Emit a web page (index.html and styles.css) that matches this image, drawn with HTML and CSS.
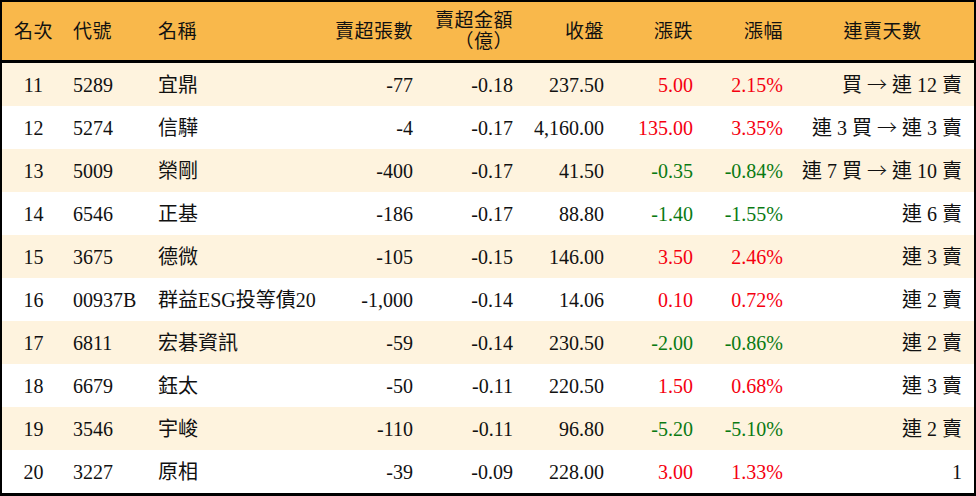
FILE: index.html
```html
<!DOCTYPE html>
<html lang="zh-Hant">
<head>
<meta charset="utf-8">
<title>賣超排行</title>
<link rel="stylesheet" href="styles.css">
</head>
<body>
<table class="rank">
  <colgroup>
    <col class="c-rank"><col class="c-code"><col class="c-name"><col class="c-vol"><col class="c-amt"><col class="c-close"><col class="c-chg"><col class="c-pct"><col class="c-days">
  </colgroup>
  <thead>
    <tr>
      <th class="center">名次</th>
      <th class="left">代號</th>
      <th class="left">名稱</th>
      <th class="right">賣超張數</th>
      <th class="right">賣超金額<br>（億）</th>
      <th class="right">收盤</th>
      <th class="right">漲跌</th>
      <th class="right">漲幅</th>
      <th class="center">連賣天數</th>
    </tr>
  </thead>
  <tbody>
    <tr><td class="center">11</td><td>5289</td><td>宜鼎</td><td class="right">-77</td><td class="right">-0.18</td><td class="right">237.50</td><td class="right up">5.00</td><td class="right up">2.15%</td><td class="right days">買 <span class="arrow">→</span> 連 12 賣</td></tr>
    <tr><td class="center">12</td><td>5274</td><td>信驊</td><td class="right">-4</td><td class="right">-0.17</td><td class="right">4,160.00</td><td class="right up">135.00</td><td class="right up">3.35%</td><td class="right days">連 3 買 <span class="arrow">→</span> 連 3 賣</td></tr>
    <tr><td class="center">13</td><td>5009</td><td>榮剛</td><td class="right">-400</td><td class="right">-0.17</td><td class="right">41.50</td><td class="right down">-0.35</td><td class="right down">-0.84%</td><td class="right days">連 7 買 <span class="arrow">→</span> 連 10 賣</td></tr>
    <tr><td class="center">14</td><td>6546</td><td>正基</td><td class="right">-186</td><td class="right">-0.17</td><td class="right">88.80</td><td class="right down">-1.40</td><td class="right down">-1.55%</td><td class="right days">連 6 賣</td></tr>
    <tr><td class="center">15</td><td>3675</td><td>德微</td><td class="right">-105</td><td class="right">-0.15</td><td class="right">146.00</td><td class="right up">3.50</td><td class="right up">2.46%</td><td class="right days">連 3 賣</td></tr>
    <tr><td class="center">16</td><td>00937B</td><td>群益ESG投等債20</td><td class="right">-1,000</td><td class="right">-0.14</td><td class="right">14.06</td><td class="right up">0.10</td><td class="right up">0.72%</td><td class="right days">連 2 賣</td></tr>
    <tr><td class="center">17</td><td>6811</td><td>宏碁資訊</td><td class="right">-59</td><td class="right">-0.14</td><td class="right">230.50</td><td class="right down">-2.00</td><td class="right down">-0.86%</td><td class="right days">連 2 賣</td></tr>
    <tr><td class="center">18</td><td>6679</td><td>鈺太</td><td class="right">-50</td><td class="right">-0.11</td><td class="right">220.50</td><td class="right up">1.50</td><td class="right up">0.68%</td><td class="right days">連 3 賣</td></tr>
    <tr><td class="center">19</td><td>3546</td><td>宇峻</td><td class="right">-110</td><td class="right">-0.11</td><td class="right">96.80</td><td class="right down">-5.20</td><td class="right down">-5.10%</td><td class="right days">連 2 賣</td></tr>
    <tr><td class="center">20</td><td>3227</td><td>原相</td><td class="right">-39</td><td class="right">-0.09</td><td class="right">228.00</td><td class="right up">3.00</td><td class="right up">1.33%</td><td class="right days">1</td></tr>
  </tbody>
</table>
</body>
</html>
```
FILE: styles.css
```css
html, body {
  margin: 0;
  padding: 0;
  background: #ffffff;
}

.rank {
  width: 976px;
  table-layout: fixed;
  border-collapse: separate;
  border-spacing: 0;
  border-style: solid;
  border-color: #000;
  border-width: 2px 2px 3px 2px;
  font-family: "Liberation Serif", "Noto Sans CJK TC", serif;
  font-size: 20px;
  color: #111;
}

.c-rank { width: 63px; }
.c-code { width: 85px; }
.c-name { width: 171px; }
.c-vol { width: 100px; }
.c-amt { width: 100px; }
.c-close { width: 91px; }
.c-chg { width: 89px; }
.c-pct { width: 90px; }
.c-days { width: 183px; }

.rank th {
  background: #f9b84b;
  height: 58px;
  padding: 0 8px;
  font-weight: normal;
  font-size: 19px;
  line-height: 21px;
  letter-spacing: 0.5px;
  border-bottom: 3px solid #000;
  vertical-align: middle;
  white-space: nowrap;
}

.rank td {
  height: 43px;
  padding: 0 8px;
  line-height: 24px;
  vertical-align: middle;
  white-space: nowrap;
  text-align: left;
}

.rank tbody tr:nth-child(odd) td {
  background: #fef3de;
}

.rank td.days {
  padding-right: 12px;
}

.arrow {
  font-family: "Noto Sans CJK TC", "DejaVu Sans", sans-serif;
  font-weight: 300;
}

.center { text-align: center !important; }
.left { text-align: left; }
.right { text-align: right !important; }

.up { color: #f5000f; }
.down { color: #0a7a12; }
```
